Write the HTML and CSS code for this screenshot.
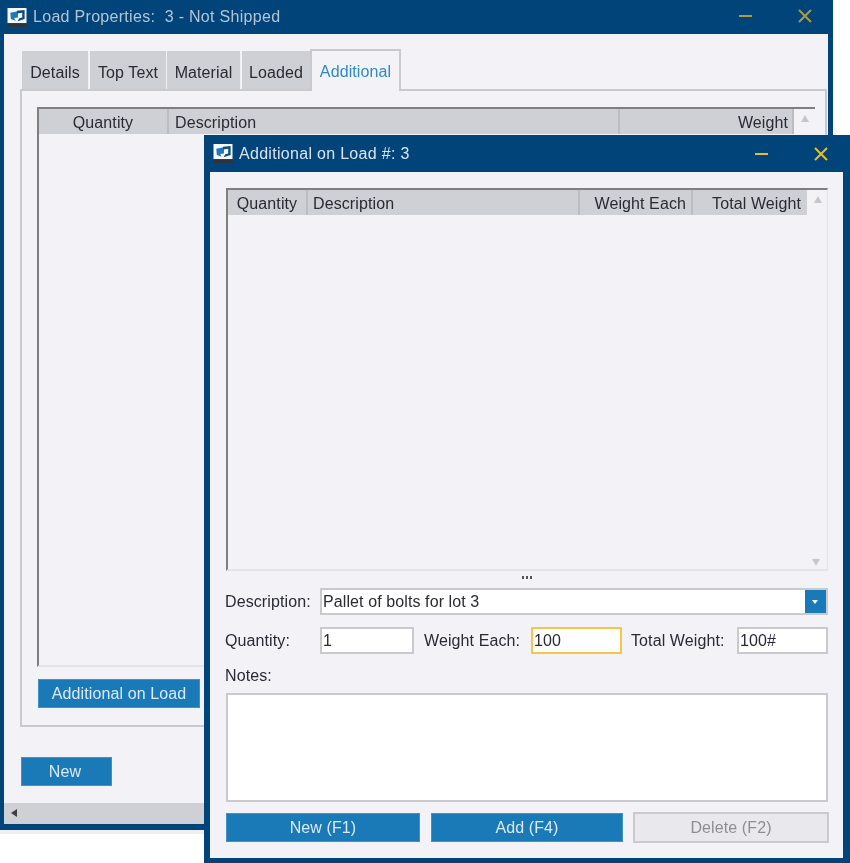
FILE: index.html
```html
<!DOCTYPE html>
<html lang="en">
<head>
<meta charset="utf-8">
<title>Load Properties</title>
<link rel="stylesheet" href="styles.css">
</head>
<body>
<svg class="sprite" width="0" height="0" aria-hidden="true">
  <symbol id="app" viewBox="0 0 20 20">
    <rect x="0" y="0" width="20" height="16" fill="#f6f8fa"/>
    <rect x="0" y="16" width="20" height="4" fill="#2a3340"/>
    <path d="M3 5 L11 3.5 V10 L7 10.5 L8.5 13.5 L3.5 11.5 Z" fill="#1d78bc"/>
    <path d="M10 2.8 L18 2 V11.5 L10.5 14 L12.5 10.8 L15.5 10 V5 L10 5.8 Z" fill="#0f4c7e"/>
  </symbol>
</svg>
<main class="desktop">
  <section class="window window-back">
    <header class="titlebar">
      <svg class="app-icon"><use href="#app"/></svg>
      <span class="title title-dim">Load Properties:&nbsp; 3 - Not Shipped</span>
      <span class="controls controls-dim">
        <svg class="ctl" viewBox="0 0 14 14"><path d="M0 7H13"/></svg>
        <svg class="ctl" viewBox="0 0 14 14"><path d="M1 1L13 13M13 1L1 13"/></svg>
      </span>
    </header>
    <div class="client">
      <nav class="tabs">
        <span class="tab tab-details">Details</span>
        <span class="tab tab-top">Top Text</span>
        <span class="tab tab-material">Material</span>
        <span class="tab tab-loaded">Loaded</span>
        <span class="tab-active">Additional</span>
      </nav>
      <div class="panel">
        <div class="grid grid-back">
          <div class="grid-head">
            <span class="col col-b1 center">Quantity</span>
            <span class="col col-b2">Description</span>
            <span class="col col-b3 right">Weight</span>
            <span class="scroll-up"></span>
          </div>
        </div>
        <button class="btn btn-additional">Additional on Load</button>
      </div>
      <button class="btn btn-new">New</button>
      <div class="hscroll"><span class="arrow-left"></span></div>
    </div>
  </section>

  <section class="window window-front">
    <header class="titlebar">
      <svg class="app-icon"><use href="#app"/></svg>
      <span class="title">Additional on Load #: 3</span>
      <span class="controls">
        <svg class="ctl" viewBox="0 0 14 14"><path d="M0 7H13"/></svg>
        <svg class="ctl" viewBox="0 0 14 14"><path d="M1 1L13 13M13 1L1 13"/></svg>
      </span>
    </header>
    <div class="client client-front">
      <div class="grid grid-front">
        <div class="grid-head">
          <span class="col col-f1 center">Quantity</span>
          <span class="col col-f2">Description</span>
          <span class="col col-f3 right">Weight Each</span>
          <span class="col col-f4 right">Total Weight</span>
          <span class="scroll-up"></span>
        </div>
        <span class="scroll-down"></span>
      </div>
      <div class="splitter"><i></i><i></i><i></i></div>
      <div class="row row-desc">
        <label class="lbl lbl-desc">Description:</label>
        <div class="combo"><span class="combo-text">Pallet of bolts for lot 3</span><span class="combo-btn"><i class="combo-caret"></i></span></div>
      </div>
      <div class="row row-qty">
        <label class="lbl lbl-qty">Quantity:</label>
        <span class="field field-qty">1</span>
        <label class="lbl lbl-each">Weight Each:</label>
        <span class="field field-each">100</span>
        <label class="lbl lbl-total">Total Weight:</label>
        <span class="field field-total">100#</span>
      </div>
      <label class="lbl lbl-notes">Notes:</label>
      <div class="notes"></div>
      <div class="actions">
        <button class="btn btn-f1">New (F1)</button>
        <button class="btn btn-f4">Add (F4)</button>
        <button class="btn btn-disabled">Delete (F2)</button>
      </div>
    </div>
  </section>
</main>
</body>
</html>
```

FILE: styles.css
```css
* { box-sizing: border-box; }
html, body { margin: 0; padding: 0; background: #fff; }
body { font-family: "Liberation Sans", Arial, sans-serif; font-size: 16px; letter-spacing: 0.1px; color: #2a2a35; }
.sprite { position: absolute; }
.desktop { position: relative; width: 850px; height: 863px; overflow: hidden; background: #fff; filter: blur(0.35px); }

.window { position: absolute; background: #004479; display: flex; flex-direction: column; }
.window-back { left: 0; top: 0; width: 833px; height: 830px; padding: 0 5px 6px 4px; box-shadow: 0 4px 0 #f0f0f4; }
.window-front { left: 204px; top: 135px; width: 646px; height: 728px; padding: 0 7px 5px 6px; }

.titlebar { height: 37px; flex: none; display: flex; align-items: center; color: #d9e3ec; }
.window-back .titlebar { height: 34px; margin-left: 3px; padding-right: 16px; }
.window-front .titlebar { margin-left: 3px; padding-right: 15px; }
.app-icon { width: 20px; height: 19px; flex: none; }
.title { margin-left: 6px; line-height: 20px; letter-spacing: 0.3px; }
.title-dim { color: #b4c4d4; }
.controls { margin-left: auto; display: flex; gap: 45px; align-items: center; }
.controls-dim { margin-bottom: 2px; }
.ctl { width: 14px; height: 14px; fill: none; stroke: #e8bd2a; stroke-width: 2; }
.controls-dim .ctl { stroke: #b09a3e; }

.client { flex: 1; background: #f2f2f7; display: flex; flex-direction: column; min-height: 0; }
.window-back .client { padding-top: 15px; }

.tabs { display: flex; align-items: flex-end; height: 40px; padding-left: 18px; }
.tab { height: 38px; padding-top: 6px; background: #cfd0d5; display: flex; align-items: center; justify-content: center; }
.tab-details { width: 66px; margin-right: 2px; }
.tab-top { width: 76px; margin-right: 1px; }
.tab-material { width: 73px; margin-right: 2px; }
.tab-loaded { width: 68px; }
.tab-active { width: 91px; height: 42px; padding-top: 2px; line-height: 38px; text-align: center; background: #f2f2f7; color: #2e8ac6; border: 2px solid #cacace; border-bottom: 0; margin-bottom: -2px; position: relative; z-index: 1; }

.panel { width: 807px; height: 638px; margin-left: 16px; border: 2px solid #cacace; padding: 16px 0 0 15px; display: flex; flex-direction: column; }
.grid { border-top: 2px solid #7f7f7f; border-left: 2px solid #7f7f7f; background: #f2f2f7; }
.grid-back { width: 778px; height: 560px; flex: none; border-bottom: 2px solid #e4e4e8; }
.grid-front { position: relative; width: 602px; height: 383px; flex: none; border-bottom: 2px solid #e4e4e8; border-right: 1px solid #e4e4e8; }
.grid-head { display: flex; height: 25px; }
.col { height: 25px; line-height: 27px; background: #cfd0d5; border-right: 2px solid #bcbdc2; padding: 0 5px; white-space: nowrap; }
.center { text-align: center; }
.right { text-align: right; }
.col-b1 { width: 130px; }
.col-b2 { width: 451px; padding-left: 6px; }
.col-b3 { width: 174px; padding-right: 4px; }
.col-f1 { width: 80px; }
.col-f2 { width: 272px; }
.col-f3 { width: 113px; }
.col-f4 { width: 114px; border-right: 0; padding-right: 6px; }
.scroll-up { flex: 1; position: relative; }
.scroll-up::after { content: ""; position: absolute; left: 7px; top: 6px; border: 4px solid transparent; border-top: 0; border-bottom: 7px solid #c6c6ca; }
.scroll-down { position: absolute; right: 7px; bottom: 3px; border: 4px solid transparent; border-bottom: 0; border-top: 7px solid #c6c6ca; }

.btn { display: block; border: 1px solid #3f92c8; border-radius: 0; background: #1a7ab8; color: #dbe9f3; font: inherit; letter-spacing: inherit; height: 29px; padding: 0; line-height: 26px; text-align: center; flex: none; }
.btn-additional { width: 162px; margin: 12px 0 0 1px; }
.btn-new { width: 91px; margin: 30px 0 0 17px; padding-right: 3px; }
.hscroll { margin-top: auto; height: 21px; background: #cfd0d5; position: relative; }
.arrow-left { position: absolute; left: 7px; top: 6px; border: 4px solid transparent; border-left: 0; border-right: 6px solid #3f3f3f; }

.client-front { padding: 16px 0 0 16px; position: relative; }
.splitter { height: 17px; width: 602px; display: flex; justify-content: center; align-items: center; gap: 2px; padding-bottom: 5px; }
.splitter i { width: 2px; height: 3px; background: #555; }
.row { display: flex; align-items: center; }
.row-desc { height: 27px; margin-left: -1px; }
.row-qty { height: 27px; margin-top: 12px; margin-left: -1px; }
.lbl { white-space: nowrap; }
.lbl-desc { width: 95px; }
.lbl-qty { width: 95px; }
.lbl-each { margin-left: 10px; width: 107px; }
.lbl-total { margin-left: 9px; width: 106px; }
.combo { width: 508px; height: 27px; border: 2px solid #cacace; background: #fff; display: flex; justify-content: space-between; }
.combo-text { padding-left: 1px; line-height: 24px; }
.combo-btn { width: 21px; height: 23px; background: #1a7ab8; position: relative; }
.combo-caret { position: absolute; left: 7px; top: 10px; border: 3px solid transparent; border-bottom: 0; border-top: 4px solid #fff; }
.field { height: 27px; border: 2px solid #cacace; background: #fff; line-height: 24px; padding-left: 1px; }
.field-qty { width: 94px; }
.field-each { width: 91px; border-color: #f6c64a; }
.field-total { width: 91px; }
.lbl-notes { display: block; height: 20px; line-height: 20px; margin: 12px 0 0 -1px; }
.notes { width: 602px; height: 109px; margin-top: 7px; border: 2px solid #cacace; background: #fff; flex: none; }
.actions { display: flex; margin-top: 11px; }
.btn-f1 { width: 194px; margin-right: 11px; }
.btn-f4 { width: 192px; margin-right: 10px; }
.btn-disabled { width: 196px; height: 31px; margin-top: -1px; background: #e9e9ed; border: 2px solid #cacace; color: #8d8d93; }
```
